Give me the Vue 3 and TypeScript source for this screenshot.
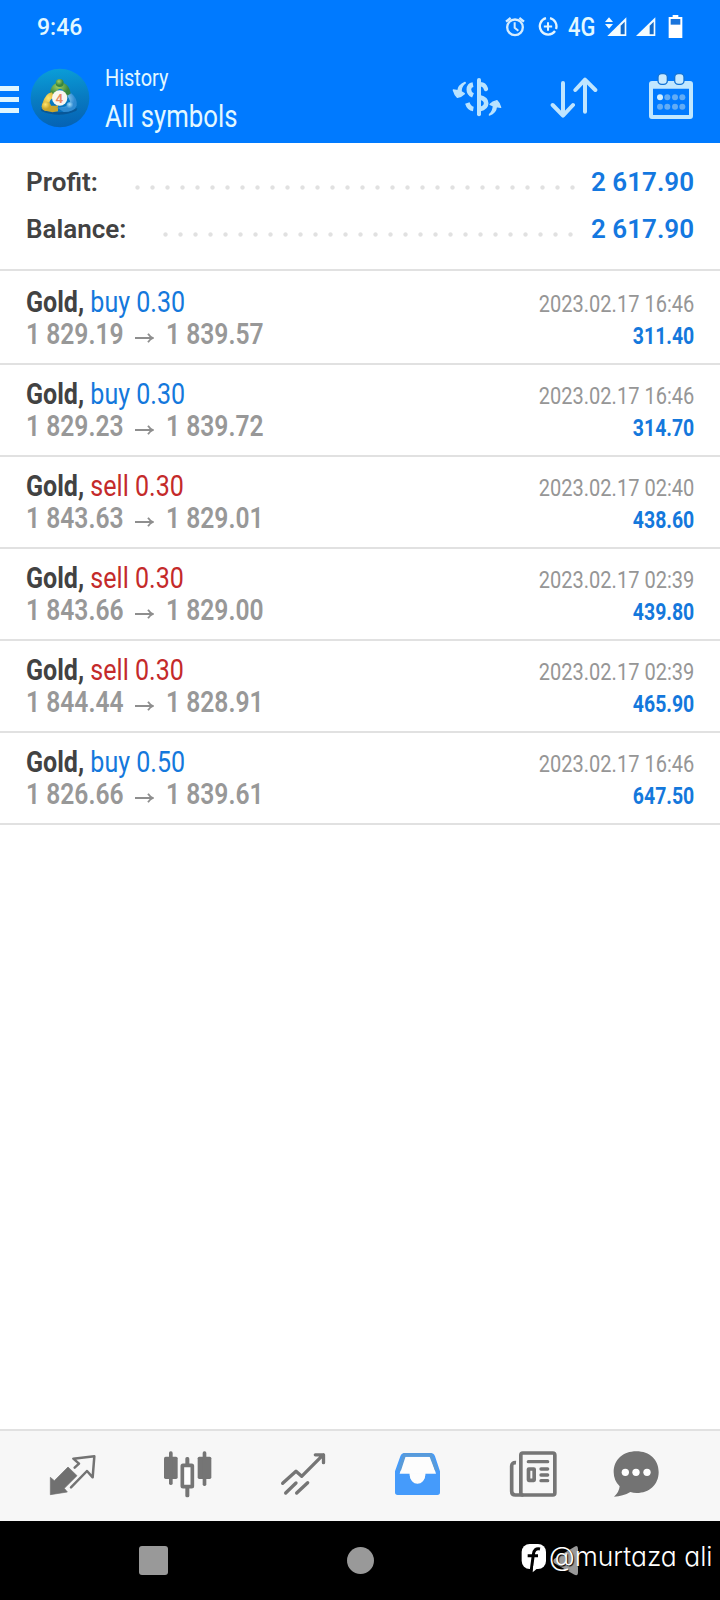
<script setup lang="ts">
interface Deal {
  side: 'buy' | 'sell'
  volume: string
  open: string
  close: string
  time: string
  profit: string
}

const summary = [
  { key: 'profit', label: 'Profit:', value: '2 617.90' },
  { key: 'balance', label: 'Balance:', value: '2 617.90' },
]

const deals: Deal[] = [
  { side: 'buy', volume: '0.30', open: '1 829.19', close: '1 839.57', time: '2023.02.17 16:46', profit: '311.40' },
  { side: 'buy', volume: '0.30', open: '1 829.23', close: '1 839.72', time: '2023.02.17 16:46', profit: '314.70' },
  { side: 'sell', volume: '0.30', open: '1 843.63', close: '1 829.01', time: '2023.02.17 02:40', profit: '438.60' },
  { side: 'sell', volume: '0.30', open: '1 843.66', close: '1 829.00', time: '2023.02.17 02:39', profit: '439.80' },
  { side: 'sell', volume: '0.30', open: '1 844.44', close: '1 828.91', time: '2023.02.17 02:39', profit: '465.90' },
  { side: 'buy', volume: '0.50', open: '1 826.66', close: '1 839.61', time: '2023.02.17 16:46', profit: '647.50' },
]
</script>

<template>
  <div class="screen">
    <header class="header">
      <div class="status">
        <span class="clock">9:46</span>
        <div class="status-icons">
          <svg class="alarm" width="20" height="25" viewBox="225 42 60 75" fill="none" stroke="#d4ecff">
            <circle cx="255" cy="82" r="23.5" stroke-width="7" />
            <path d="M228 65 L242 54 M282 65 L268 54" stroke-width="7" />
            <path d="M254 67 V83 L265 92" stroke-width="6" />
          </svg>
          <svg class="saver" width="20" height="25" viewBox="324 42 60 75" fill="none" stroke="#e4f5ff">
            <path d="M348 54.500 A25 25 0 1 0 375 93" stroke-width="7" />
            <path d="M360 54.500 A25 25 0 0 1 378 87" stroke-width="7" />
            <path d="M354 67 V92 M341.500 79.500 H366.500" stroke-width="6" />
          </svg>
          <span class="network"><span>4G</span></span>
          <svg class="signal-data" width="23" height="25" viewBox="522 42 69 75">
            <path d="M525 66 L537 52 L549 66 Z M525 72 L549 72 L537 86 Z" fill="#f0faff" />
            <path d="M532 108 L589 52 V108 Z" fill="#f4fcff" />
            <path d="M572 77 L584 65 V103 H572 Z" fill="#1169c8" />
          </svg>
          <svg class="signal" width="21" height="25" viewBox="615 42 63 75">
            <path d="M618 108 L676 52 V108 Z" fill="#f4fcff" />
            <path d="M659 77 L671 65 V103 H659 Z" fill="#1169c8" />
          </svg>
          <svg class="battery" width="15" height="25" viewBox="714 42 45 75">
            <path d="M728 45 H745 V51 H757 V114 H716 V51 H728 Z" fill="#fff" />
            <path d="M722 57 H751 V74 H722 Z" fill="#1974dc" />
          </svg>
        </div>
      </div>

      <div class="appbar">
        <div class="menu"><i></i><i></i><i></i></div>
        <svg class="logo" width="60" height="60" viewBox="0 0 180 180">
          <defs>
            <linearGradient id="disc" x1="0.400" y1="0" x2="0.500" y2="1">
              <stop offset="0" stop-color="#0a9ed8" />
              <stop offset="0.500" stop-color="#087cc2" />
              <stop offset="1" stop-color="#0562b4" />
            </linearGradient>
            <radialGradient id="green" cx="0.400" cy="0.300"><stop offset="0" stop-color="#a3cf62" /><stop offset="1" stop-color="#37863f" /></radialGradient>
            <radialGradient id="gold" cx="0.400" cy="0.300"><stop offset="0" stop-color="#ffe56e" /><stop offset="1" stop-color="#c8a52c" /></radialGradient>
            <radialGradient id="azure" cx="0.400" cy="0.300"><stop offset="0" stop-color="#a9defa" /><stop offset="1" stop-color="#2f8bd2" /></radialGradient>
          </defs>
          <circle cx="90" cy="90" r="88" fill="url(#disc)" />
          <path d="M32 122 Q88 144 142 120 L139 128 Q88 152 34 129 Z" fill="#0a3f75" opacity="0.500" />
          <path d="M60 88 Q57 48 89 42 Q123 46 122 88 L104 86 Q102 62 90 62 Q78 64 78 85 Z" fill="url(#green)" />
          <path d="M84 130 Q60 137 38 124 L36 110 Q46 74 66 73 L73 88 Q57 94 58 110 Q66 116 84 112 Z" fill="url(#gold)" />
          <path d="M79 117 Q97 120 117 112 Q125 98 111 83 L124 76 Q143 92 140 113 Q132 132 101 132 Z" fill="url(#azure)" />
          <circle cx="89" cy="45" r="12" fill="url(#green)" />
          <circle cx="49" cy="115" r="14" fill="url(#gold)" />
          <circle cx="121" cy="114" r="12" fill="url(#azure)" />
          <circle cx="89" cy="90" r="23" fill="#f8f6f0" />
          <text x="88" y="104" text-anchor="middle" class="logo-four">4</text>
        </svg>
        <div class="titles">
          <div class="overline"><span>History</span></div>
          <div class="title"><span>All symbols</span></div>
        </div>

        <div class="actions">
          <svg width="52" height="47" viewBox="66 219 156 141" fill="none" stroke="#b9e3ff">
            <path d="M147 240 V343" stroke-width="12" stroke-linecap="round" />
            <path d="M129 254 C113 257 112 279 129 286" stroke-width="14" />
            <path d="M149 253 C158 252 165 258 168 267" stroke-width="13" stroke-linecap="round" />
            <path d="M149 292 C175 298 175 322 149 328" stroke-width="14" />
            <path d="M112 309 Q117 325 130 327" stroke-width="14" />
            <path d="M105 247 Q85 256 84 272 L70 270 Q74 284 82 292 Q95 289 103 281 L93 275 Q93 258 106 249 Z" fill="#b9e3ff" stroke-width="4" stroke-linejoin="round" />
            <path d="M178 345 Q198 338 199 320 L212 322 Q209 309 201 302 Q187 305 180 313 L190 318 Q190 333 179 343 Z" fill="#b9e3ff" stroke-width="4" stroke-linejoin="round" />
          </svg>
          <svg class="sort" width="48" height="47" viewBox="360 219 144 141" fill="none" stroke="#bfe5ff" stroke-linecap="round" stroke-linejoin="round">
            <path d="M399 249 V344 M368 315 L399 347 L429 315" stroke-width="12" />
            <path d="M465 335 V243 M436 270 L465 239 L496 270" stroke-width="12" />
          </svg>
          <svg class="calendar" width="46" height="47" viewBox="654 219 138 141">
            <rect x="663" y="249" width="120" height="102" rx="3" fill="none" stroke="#c0e7ff" stroke-width="12" />
            <path d="M664 250 H782 V266 H664 Z" fill="#c0e7ff" />
            <rect x="684" y="221" width="28" height="32" rx="11" fill="#c8eaff" stroke="#1273d5" stroke-width="4" />
            <rect x="734" y="221" width="28" height="32" rx="11" fill="#c8eaff" stroke="#1273d5" stroke-width="4" />
            <g fill="#62acf5">
              <circle cx="712" cy="292" r="9" /><circle cx="735" cy="292" r="9" /><circle cx="757" cy="292" r="9" />
              <circle cx="690" cy="320" r="9" /><circle cx="712" cy="320" r="9" /><circle cx="735" cy="320" r="9" /><circle cx="757" cy="320" r="9" />
            </g>
            <circle cx="690" cy="292" r="9" fill="#d2efff" />
          </svg>
        </div>
      </div>
    </header>

    <section class="summary">
      <div v-for="row in summary" :key="row.key" class="summary-row" :class="row.key">
        <span class="summary-label"><span>{{ row.label }}</span></span>
        <span class="leader"></span>
        <span class="summary-value">{{ row.value }}</span>
      </div>
    </section>

    <main class="deals">
      <article v-for="(deal, i) in deals" :key="i" class="deal">
        <div class="left">
          <div class="symbol"><b>Gold,</b> <span :class="deal.side">{{ deal.side }} {{ deal.volume }}</span></div>
          <div class="prices">
            <span class="price open">{{ deal.open }}</span>
            <svg class="arrow" width="19" height="10" viewBox="0 0 19 10" fill="none" stroke="#8e8e8e" stroke-width="1.800"><path d="M0 5 H17.500 M13 0.800 Q15 4 18 5 Q15 6 13 9.200" /></svg>
            <span class="price">{{ deal.close }}</span>
          </div>
        </div>
        <div class="right">
          <div class="time">{{ deal.time }}</div>
          <div class="gain">{{ deal.profit }}</div>
        </div>
      </article>
    </main>

    <nav class="tabs">
      <svg width="49" height="52" viewBox="144 84 147 156">
        <path d="M151 172 L163 182 L204 141 L231 167 L193 205 L202 216 L151 224 Z" fill="#707070" stroke="#707070" stroke-width="2" stroke-linejoin="round" />
        <path d="M224 143 L237 131 L220 116 L283 109 L278 172 L261 153 L213 202" fill="none" stroke="#737373" stroke-width="7.500" stroke-linejoin="round" stroke-linecap="round" />
      </svg>
      <svg width="51" height="52" viewBox="486 84 153 156" fill="#757575">
        <rect x="492" y="110" width="41" height="67" rx="5" /><rect x="507" y="94" width="11" height="101" rx="5" />
        <rect x="593" y="110" width="41" height="67" rx="5" /><rect x="608" y="94" width="11" height="104" rx="5" />
        <rect x="556" y="111" width="12" height="121" rx="5" /><rect x="547" y="136" width="30" height="64" rx="2" fill="#fdfdfd" stroke="#757575" stroke-width="11" />
      </svg>
      <svg width="46" height="52" viewBox="837 84 138 156" fill="none" stroke="#757575" stroke-width="10" stroke-linecap="round" stroke-linejoin="round">
        <path d="M845 190 L885 154 L902 169 L967 104 M943 104.500 H967.500 V128" /><path d="M854 219 L885 189 M887 219 L920 188" />
      </svg>
      <svg width="47" height="52" viewBox="102 84 141 156">
        <path d="M132 105 H214 L230 161 H118 Z" fill="#fdfdfd" />
        <path fill-rule="evenodd" d="M134 99 H212 Q221 99 225 109 L240 154 V217 Q240 225 232 225 H113 Q105 225 105 217 V154 L121 109 Q125 99 134 99 Z M137 110 L132 113 L119 161 H149 C149 201 196 201 196 161 H228 L213 113 L208 110 Z" fill="#459bfb" />
        <path d="M118 151 L133 105 H212 L230 151" fill="none" stroke="#599bd9" stroke-width="10" />
        <path d="M149 160 C149 200 196 200 196 160 Z" fill="#fdfdfd" />
      </svg>
      <svg width="50" height="52" viewBox="444 84 150 156" fill="none" stroke="#757575" stroke-width="11">
        <rect x="482.500" y="99" width="102" height="126" rx="6" />
        <path d="M468 128 Q455 127 455 138 V214 Q455 225 466 225 H490" stroke-linejoin="round" />
        <path d="M505 125 H563 M543 147 H563 M543 165 H563 M543 182 H563" stroke-linecap="round" stroke-width="10" />
        <rect x="505.500" y="147" width="17" height="34" rx="1" stroke-width="11" />
      </svg>
      <svg width="48" height="52" viewBox="756 84 144 156">
        <path d="M829 94 C869 94 896 119 896 156 C896 194 868 219 830 219 Q820 219 811 216 Q789 229 762 230 Q777 218 779 199 Q761 181 761 156 C761 119 789 94 829 94 Z" fill="#737373" />
        <g fill="#fff"><circle cx="796" cy="157" r="11" /><circle cx="828" cy="157" r="11" /><circle cx="861" cy="157" r="11" /></g>
      </svg>
    </nav>

    <footer class="system">
      <span class="recent"></span>
      <span class="home"></span>
      <svg class="back" width="27" height="32" viewBox="0 0 27 32"><path d="M2 14 L23 1.500 Q26 0 26 4 V27 Q26 32 22 29.500 L2 18 Q0 16 2 14 Z" fill="#999" /></svg>
      <div class="watermark">
        <svg width="26" height="30" viewBox="483 370 78 90">
          <rect x="485" y="373" width="73" height="75" rx="24" fill="#fff" />
          <path d="M540 388 Q522 384 520 405 L514 450 M503 408 H534" fill="none" stroke="#000" stroke-width="9" />
          <path d="M520 438 L536 443 L518 458 Z" fill="#fff" />
        </svg>
        <span class="handle">@murtaza ali</span>
      </div>
    </footer>
  </div>
</template>

<style>
body {
  margin: 0;
  background: #fff;
}
</style>

<style scoped>
.screen {
  display: flex;
  flex-direction: column;
  width: 720px;
  height: 1600px;
  overflow: hidden;
  background: #fff;
  font-family: Roboto, "Liberation Sans", sans-serif;
  white-space: nowrap;
}
svg {
  display: block;
  flex: none;
}
.header {
  flex: none;
  height: 143px;
  background: #007aff;
  color: #e3f8ff;
}
.status {
  display: flex;
  height: 52px;
  padding: 0 37px 0 37px;
  justify-content: space-between;
}
.clock {
  font-size: 23px;
  font-weight: 500;
  line-height: 55px;
}
.status-icons {
  display: flex;
  padding-top: 14px;
}
.saver { margin-left: 13px; }
.network {
  width: 36px;
  padding-left: 10px;
  box-sizing: border-box;
  margin-right: 10px;
  font-size: 26px;
  font-weight: 500;
  line-height: 26px;
}
.network span {
  display: inline-block;
  transform: scaleX(0.84);
  transform-origin: left;
}
.signal { margin-left: 8px; }
.battery { margin-left: 12px; }
.appbar {
  display: flex;
  height: 91px;
}
.menu {
  display: flex;
  flex-direction: column;
  gap: 6px;
  width: 19px;
  padding-top: 34px;
}
.menu i {
  height: 5px;
  background: #dff6ff;
}
.logo {
  margin: 16px 0 0 11px;
}
.logo-four {
  font: 600 40px Roboto, sans-serif;
  fill: #e88a62;
}
.titles {
  margin: 10px 0 0 15px;
}
.overline {
  font-size: 24px;
  font-weight: 450;
  line-height: 32px;
}
.title {
  font-size: 32px;
  font-weight: 450;
  line-height: 40px;
  margin-top: 2px;
}
.overline span,
.title span {
  display: inline-block;
  transform: scaleX(0.83);
  transform-origin: left;
}
.title span {
  transform: scaleX(0.805);
}
.actions {
  display: flex;
  margin-left: auto;
  padding: 21px 26px 0 0;
}
.sort { margin-left: 46px; }
.calendar { margin-left: 50px; }

.summary {
  flex: none;
  height: 128px;
  box-sizing: border-box;
  padding: 16px 26px 0;
  border-bottom: 2px solid #e1e1e1;
  font-size: 26px;
  font-weight: 650;
}
.summary-row {
  display: flex;
  height: 47px;
  line-height: 47px;
}
.summary-label {
  width: 104px;
  color: #424242;
}
.leader {
  width: 450px;
  height: 15px;
  margin-top: 21px;
  background: radial-gradient(circle, #e1e1e1 1.7px, transparent 2.6px) 0 0 / 15px 15px repeat-x;
}
.balance .summary-label { width: 132px; }
.balance .leader { width: 420px; }
.summary-value {
  margin-left: auto;
  color: #1478e0;
}

.deals {
  flex: 1;
  padding-top: 2px;
}
.deal {
  display: flex;
  justify-content: space-between;
  height: 92px;
  box-sizing: border-box;
  padding: 13px 26px 0;
  border-bottom: 2px solid #e1e1e1;
  line-height: 32px;
}
.symbol {
  font-size: 30px;
  transform: scaleX(0.835);
  transform-origin: left;
  color: #424242;
}
.symbol span { font-weight: 430; }
.buy { color: #1478dc; }
.sell { color: #c42a2a; }
.prices {
  display: flex;
  color: #989898;
}
.price {
  font-size: 29.5px;
  font-weight: 650;
  transform: scaleX(0.835);
  transform-origin: left;
}
.price.open {
  width: 109px;
}
.arrow {
  margin: 15px 12px 0 0;
}
.right {
  padding-top: 2px;
  text-align: right;
}
.time {
  font-size: 24px;
  color: #969696;
  transform: scaleX(0.835);
  transform-origin: right;
}
.gain {
  font-size: 24px;
  font-weight: 700;
  color: #1478dc;
  transform: scaleX(0.81);
  transform-origin: right;
}

.tabs {
  display: grid;
  grid-template-columns: repeat(5, 115px) 92px;
  justify-items: center;
  flex: none;
  height: 92px;
  box-sizing: border-box;
  padding: 17px 0 0 15px;
  border-top: 2px solid #e1e1e1;
  background: #f7f7f7;
}

.system {
  position: relative;
  display: flex;
  align-items: flex-start;
  flex: none;
  height: 79px;
  box-sizing: border-box;
  padding: 25px 0 0 139px;
  background: #000;
}
.recent {
  width: 29px;
  height: 29px;
  border-radius: 3px;
  background: #999;
}
.home {
  width: 27px;
  height: 27px;
  margin: 1px 0 0 179px;
  border-radius: 50%;
  background: #999;
}
.back {
  margin: -1px 0 0 178px;
}
.watermark {
  position: absolute;
  left: 521px;
  top: 22px;
  display: flex;
  color: #fff;
}
.handle {
  margin-left: 2px;
  font: 300 27px/30px Inter, "Open Sans", sans-serif;
  font-feature-settings: "cv11";
  text-shadow: 1px 1px 1px #000;
  transform: translateY(-1.5px) scaleX(0.98);
  transform-origin: left;
}
</style>
